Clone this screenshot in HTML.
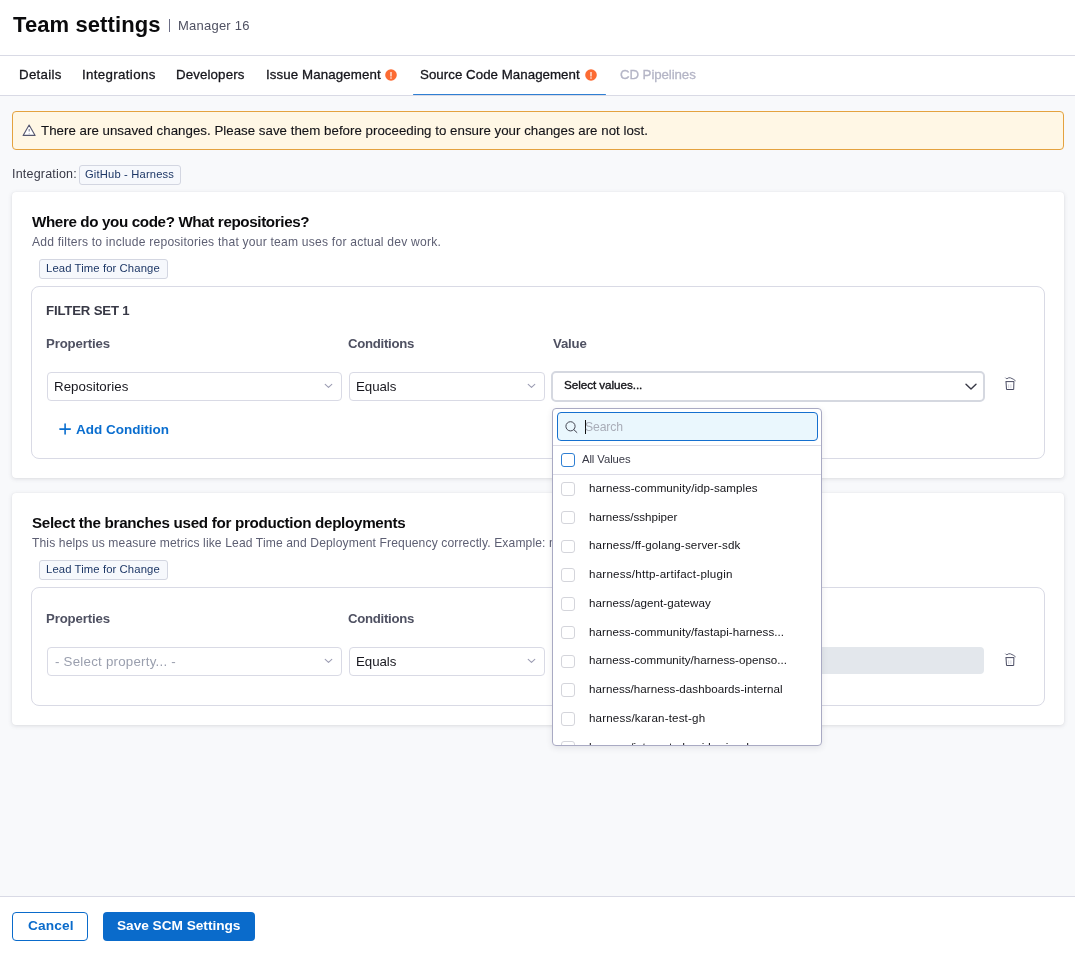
<!DOCTYPE html>
<html><head><meta charset="utf-8"><style>
*{box-sizing:border-box;margin:0;padding:0}
html,body{width:1075px;height:954px;overflow:hidden;background:#f8f9fb;font-family:"Liberation Sans",sans-serif;color:#22222a;position:relative}
.t{position:absolute;white-space:nowrap;will-change:transform}
.r{position:absolute}
svg{position:absolute;overflow:visible}
</style></head><body>
<div class="r" style="left:0px;top:0px;width:1075px;height:95px;background:#fff"></div>
<div class="r" style="left:0px;top:55px;width:1075px;height:1px;background:#d9dae5"></div>
<div class="r" style="left:0px;top:95px;width:1075px;height:1px;background:#d9dae5"></div>
<div class="t" style="left:12.88px;top:12.38px;font-size:22px;line-height:26.4px;font-weight:bold;color:#0b0b0d;letter-spacing:0.100px;">Team settings</div>
<div class="r" style="left:169px;top:18.5px;width:1.3px;height:13.5px;background:#6b6d85"></div>
<div class="t" style="left:177.83px;top:17.90px;font-size:13px;line-height:15.6px;font-weight:normal;color:#4f5162;letter-spacing:0.230px;">Manager 16</div>
<div class="t" style="left:18.90px;top:66.81px;font-size:13.3px;line-height:15.96px;font-weight:normal;color:#16161c;letter-spacing:0.283px;-webkit-text-stroke:0.3px #16161c;">Details</div>
<div class="t" style="left:81.67px;top:66.81px;font-size:13.3px;line-height:15.96px;font-weight:normal;color:#16161c;letter-spacing:0.346px;-webkit-text-stroke:0.3px #16161c;">Integrations</div>
<div class="t" style="left:175.80px;top:66.81px;font-size:13.3px;line-height:15.96px;font-weight:normal;color:#16161c;letter-spacing:0.122px;-webkit-text-stroke:0.3px #16161c;">Developers</div>
<div class="t" style="left:265.57px;top:66.81px;font-size:13.3px;line-height:15.96px;font-weight:normal;color:#16161c;letter-spacing:0.101px;-webkit-text-stroke:0.3px #16161c;">Issue Management</div>
<div class="t" style="left:420.20px;top:66.81px;font-size:13.3px;line-height:15.96px;font-weight:normal;color:#16161c;letter-spacing:0.035px;-webkit-text-stroke:0.3px #16161c;">Source Code Management</div>
<div class="t" style="left:619.63px;top:66.81px;font-size:13.3px;line-height:15.96px;font-weight:normal;color:#b4b5c6;letter-spacing:-0.095px;-webkit-text-stroke:0.3px #b4b5c6;">CD Pipelines</div>
<svg style="left:385.3px;top:69.1px" width="12" height="12" viewBox="0 0 12 12"><circle cx="6" cy="6" r="5.8" fill="#fc6b33"/><rect x="5.4" y="2.9" width="1.2" height="4.5" rx="0.5" fill="#fff"/><rect x="5.4" y="8.2" width="1.2" height="1.6" rx="0.4" fill="#fff"/></svg>
<svg style="left:585.1px;top:69.1px" width="12" height="12" viewBox="0 0 12 12"><circle cx="6" cy="6" r="5.8" fill="#fc6b33"/><rect x="5.4" y="2.9" width="1.2" height="4.5" rx="0.5" fill="#fff"/><rect x="5.4" y="8.2" width="1.2" height="1.6" rx="0.4" fill="#fff"/></svg>
<div class="r" style="left:413px;top:93.5px;width:193px;height:1.8px;background:#2f7fd3;border-radius:1px"></div>
<div class="r" style="left:12px;top:111px;width:1052px;height:39px;background:#fff7e5;border:1px solid #e4a23f;border-radius:4px"></div>
<svg style="left:22px;top:123.5px" width="15" height="13" viewBox="0 0 15 13"><path d="M7.1 1.0 L13.1 11.4 H1.1 Z" fill="#fff" stroke="#55576f" stroke-width="1.1" stroke-linejoin="round"/><path d="M7.2 4.9 V7.6" stroke="#7d7f95" stroke-width="1.1"/><circle cx="7.2" cy="9.7" r="0.55" fill="#9a9cb0"/></svg>
<div class="t" style="left:40.60px;top:122.61px;font-size:13.3px;line-height:15.96px;font-weight:normal;color:#131318;letter-spacing:0.016px;-webkit-text-stroke:0.12px #131318;">There are unsaved changes. Please save them before proceeding to ensure your changes are not lost.</div>
<div class="t" style="left:11.54px;top:166.57px;font-size:12.5px;line-height:15.0px;font-weight:normal;color:#383946;letter-spacing:0.195px;">Integration:</div>
<div class="r" style="left:79px;top:165px;width:102px;height:20px;background:#f6f8fc;border:1px solid #d3d6e1;border-radius:3px"></div>
<div class="t" style="left:84.94px;top:167.60px;font-size:11.2px;line-height:13.44px;font-weight:normal;color:#1d3766;letter-spacing:0.169px;">GitHub - Harness</div>
<div class="r" style="left:12px;top:192px;width:1052px;height:286px;background:#fff;border-radius:4px;box-shadow:0 0 1px rgba(40,41,61,0.08),0 1px 4px rgba(96,97,112,0.18)"></div>
<div class="t" style="left:32.00px;top:213.41px;font-size:15.2px;line-height:18.24px;font-weight:bold;color:#0b0b0d;letter-spacing:-0.377px;">Where do you code? What repositories?</div>
<div class="t" style="left:31.97px;top:235.45px;font-size:12.1px;line-height:14.52px;font-weight:normal;color:#5d5f73;letter-spacing:0.217px;">Add filters to include repositories that your team uses for actual dev work.</div>
<div class="r" style="left:39px;top:259px;width:129px;height:20px;background:#f6f8fc;border:1px solid #d3d6e1;border-radius:3px"></div>
<div class="t" style="left:46.07px;top:261.80px;font-size:11.3px;line-height:13.56px;font-weight:normal;color:#1d3766;letter-spacing:0.100px;">Lead Time for Change</div>
<div class="r" style="left:31px;top:286px;width:1014px;height:173px;background:#fff;border:1px solid #d9dae5;border-radius:8px"></div>
<div class="t" style="left:46.31px;top:302.91px;font-size:13.2px;line-height:15.84px;font-weight:bold;color:#383946;letter-spacing:-0.162px;">FILTER SET 1</div>
<div class="t" style="left:46.31px;top:335.81px;font-size:13.2px;line-height:15.84px;font-weight:bold;color:#4f5162;letter-spacing:-0.139px;">Properties</div>
<div class="t" style="left:348.47px;top:335.81px;font-size:13.2px;line-height:15.84px;font-weight:bold;color:#4f5162;letter-spacing:-0.283px;">Conditions</div>
<div class="t" style="left:552.60px;top:335.81px;font-size:13.2px;line-height:15.84px;font-weight:bold;color:#4f5162;letter-spacing:-0.164px;">Value</div>
<div class="r" style="left:47px;top:372px;width:295px;height:29px;background:#fff;border:1px solid #d9dae5;border-radius:4px"></div>
<div class="t" style="left:54.30px;top:378.71px;font-size:13.3px;line-height:15.96px;font-weight:normal;color:#18181f;letter-spacing:0.041px;">Repositories</div>
<svg style="left:324.0px;top:383px" width="9" height="6" viewBox="0 0 9 6"><path d="M1.2 1.3 L4.5 4.4 L7.8 1.3" fill="none" stroke="#9c9db3" stroke-width="1.1" stroke-linecap="round" stroke-linejoin="round"/></svg>
<div class="r" style="left:349px;top:372px;width:196px;height:29px;background:#fff;border:1px solid #d9dae5;border-radius:4px"></div>
<div class="t" style="left:356.00px;top:378.71px;font-size:13.3px;line-height:15.96px;font-weight:normal;color:#18181f;letter-spacing:-0.060px;">Equals</div>
<svg style="left:527.0px;top:383px" width="9" height="6" viewBox="0 0 9 6"><path d="M1.2 1.3 L4.5 4.4 L7.8 1.3" fill="none" stroke="#9c9db3" stroke-width="1.1" stroke-linecap="round" stroke-linejoin="round"/></svg>
<div class="r" style="left:551px;top:371px;width:434px;height:30.5px;background:#fff;border:2px solid #d5d8e0;border-radius:5px"></div>
<div class="t" style="left:563.97px;top:377.93px;font-size:11.7px;line-height:14.04px;font-weight:normal;color:#141419;letter-spacing:-0.063px;-webkit-text-stroke:0.35px #141419;">Select values...</div>
<svg style="left:964.5px;top:382.5px" width="12" height="8" viewBox="0 0 12 8"><path d="M1 1.2 L6 6.0 L11 1.2" fill="none" stroke="#383946" stroke-width="1.4" stroke-linecap="round" stroke-linejoin="round"/></svg>
<svg style="left:1004px;top:376px" width="14" height="16" viewBox="0 0 14 16"><path d="M1.6 2.0 Q2.2 2.9 3.0 2.7 Q4.8 1.3 6.3 1.8 Q9.6 3.0 11.3 4.6" fill="none" stroke="#4a4c63" stroke-width="0.9" stroke-linecap="round"/><path d="M1.6 5.6 H10.2" stroke="#4a4c63" stroke-width="1"/><path d="M2.0 5.6 L2.5 13.5 H9.7 L9.9 5.6" fill="none" stroke="#4a4c63" stroke-width="1" stroke-linejoin="round"/><path d="M4.7 8.3 V12.2 M6.9 8.3 V12.2" stroke="#c9cad6" stroke-width="0.8"/></svg>
<svg style="left:59px;top:422px" width="12" height="13" viewBox="0 0 12 13"><path d="M6.1 2.1 V12 M0.9 7.1 H11.3" stroke="#0a6ecf" stroke-width="1.6" stroke-linecap="round"/></svg>
<div class="t" style="left:75.66px;top:421.52px;font-size:13.5px;line-height:16.2px;font-weight:bold;color:#0a6ecf;letter-spacing:-0.008px;">Add Condition</div>
<div class="r" style="left:12px;top:493px;width:1052px;height:232px;background:#fff;border-radius:4px;box-shadow:0 0 1px rgba(40,41,61,0.08),0 1px 4px rgba(96,97,112,0.18)"></div>
<div class="t" style="left:31.54px;top:514.41px;font-size:15.2px;line-height:18.24px;font-weight:bold;color:#0b0b0d;letter-spacing:-0.308px;">Select the branches used for production deployments</div>
<div class="t" style="left:31.73px;top:535.75px;font-size:12.1px;line-height:14.52px;color:#5d5f73;letter-spacing:0.124px">This helps us measure metrics like Lead Time and Deployment Frequency correctly. Example: main, master, release/*</div>
<div class="r" style="left:39px;top:560px;width:129px;height:20px;background:#f6f8fc;border:1px solid #d3d6e1;border-radius:3px"></div>
<div class="t" style="left:46.07px;top:562.80px;font-size:11.3px;line-height:13.56px;font-weight:normal;color:#1d3766;letter-spacing:0.100px;">Lead Time for Change</div>
<div class="r" style="left:31px;top:587px;width:1014px;height:119px;background:#fff;border:1px solid #d9dae5;border-radius:8px"></div>
<div class="t" style="left:46.31px;top:611.11px;font-size:13.2px;line-height:15.84px;font-weight:bold;color:#4f5162;letter-spacing:-0.139px;">Properties</div>
<div class="t" style="left:348.47px;top:611.11px;font-size:13.2px;line-height:15.84px;font-weight:bold;color:#4f5162;letter-spacing:-0.283px;">Conditions</div>
<div class="r" style="left:47px;top:647px;width:295px;height:29px;background:#fff;border:1px solid #d9dae5;border-radius:4px"></div>
<div class="t" style="left:54.80px;top:653.71px;font-size:13.3px;line-height:15.96px;font-weight:normal;color:#9a9fae;letter-spacing:0.236px;">- Select property... -</div>
<svg style="left:324.0px;top:658px" width="9" height="6" viewBox="0 0 9 6"><path d="M1.2 1.3 L4.5 4.4 L7.8 1.3" fill="none" stroke="#9c9db3" stroke-width="1.1" stroke-linecap="round" stroke-linejoin="round"/></svg>
<div class="r" style="left:349px;top:647px;width:196px;height:29px;background:#fff;border:1px solid #d9dae5;border-radius:4px"></div>
<div class="t" style="left:356.00px;top:653.71px;font-size:13.3px;line-height:15.96px;font-weight:normal;color:#18181f;letter-spacing:-0.060px;">Equals</div>
<svg style="left:527.0px;top:658px" width="9" height="6" viewBox="0 0 9 6"><path d="M1.2 1.3 L4.5 4.4 L7.8 1.3" fill="none" stroke="#9c9db3" stroke-width="1.1" stroke-linecap="round" stroke-linejoin="round"/></svg>
<div class="r" style="left:552px;top:647px;width:432px;height:27px;background:#e3e7ec;border-radius:4px"></div>
<svg style="left:1004px;top:652px" width="14" height="16" viewBox="0 0 14 16"><path d="M1.6 2.0 Q2.2 2.9 3.0 2.7 Q4.8 1.3 6.3 1.8 Q9.6 3.0 11.3 4.6" fill="none" stroke="#4a4c63" stroke-width="0.9" stroke-linecap="round"/><path d="M1.6 5.6 H10.2" stroke="#4a4c63" stroke-width="1"/><path d="M2.0 5.6 L2.5 13.5 H9.7 L9.9 5.6" fill="none" stroke="#4a4c63" stroke-width="1" stroke-linejoin="round"/><path d="M4.7 8.3 V12.2 M6.9 8.3 V12.2" stroke="#c9cad6" stroke-width="0.8"/></svg>
<div class="r" style="left:0px;top:896px;width:1075px;height:58px;background:#fff;border-top:1px solid #d9dae5"></div>
<div class="r" style="left:12px;top:912px;width:76px;height:29px;background:#fff;border:1px solid #0a6bcb;border-radius:4px"></div>
<div class="t" style="left:27.55px;top:917.73px;font-size:13.7px;line-height:16.44px;font-weight:bold;color:#0a6bcb;letter-spacing:0.154px;">Cancel</div>
<div class="r" style="left:103px;top:912px;width:152px;height:29px;background:#0a6bcb;border-radius:4px"></div>
<div class="t" style="left:116.89px;top:917.73px;font-size:13.7px;line-height:16.44px;font-weight:bold;color:#ffffff;letter-spacing:-0.033px;">Save SCM Settings</div>
<div class="r" style="left:552px;top:408px;width:270px;height:338px;background:#fff;border:1px solid #a9aac3;border-radius:4px;box-shadow:0 2px 6px rgba(40,41,61,0.10)"></div>
<div class="r" style="left:557px;top:412px;width:261px;height:29px;background:#eaf7fd;border:1.2px solid #1570cf;border-radius:4px"></div>
<svg style="left:564.5px;top:421px" width="13" height="12" viewBox="0 0 13 12"><circle cx="5.5" cy="5.3" r="4.6" fill="none" stroke="#3c3d4a" stroke-width="0.95"/><path d="M8.9 8.7 L11.9 11.5" stroke="#3c3d4a" stroke-width="1" stroke-linecap="round"/></svg>
<div class="r" style="left:585px;top:420px;width:1.1px;height:14px;background:#111"></div>
<div class="t" style="left:585.45px;top:419.75px;font-size:12.2px;line-height:14.64px;font-weight:normal;color:#a9adb8;letter-spacing:-0.126px;">Search</div>
<div class="r" style="left:553px;top:445px;width:268px;height:1px;background:#dcdce6"></div>
<div class="r" style="left:561px;top:453px;width:14px;height:14px;background:#fff;border:1.3px solid #2f7fd3;border-radius:3px"></div>
<div class="t" style="left:582.37px;top:453.10px;font-size:11.3px;line-height:13.56px;font-weight:normal;color:#383946;letter-spacing:-0.087px;">All Values</div>
<div class="r" style="left:553px;top:474px;width:268px;height:1px;background:#dcdce6"></div>
<div class="r" style="left:552px;top:475px;width:270px;height:270px;overflow:hidden">
<div class="r" style="left:9.299999999999955px;top:7.199999999999989px;width:13.5px;height:13.5px;background:#fff;border:1px solid #d4d5db;border-radius:3px"></div>
<div class="t" style="left:36.69px;top:6.02px;font-size:11.6px;line-height:13.92px;font-weight:normal;color:#141419;letter-spacing:0.058px;">harness-community/idp-samples</div>
<div class="r" style="left:9.299999999999955px;top:35.93000000000001px;width:13.5px;height:13.5px;background:#fff;border:1px solid #d4d5db;border-radius:3px"></div>
<div class="t" style="left:36.69px;top:34.75px;font-size:11.6px;line-height:13.92px;font-weight:normal;color:#141419;letter-spacing:-0.003px;">harness/sshpiper</div>
<div class="r" style="left:9.299999999999955px;top:64.65999999999997px;width:13.5px;height:13.5px;background:#fff;border:1px solid #d4d5db;border-radius:3px"></div>
<div class="t" style="left:36.69px;top:63.48px;font-size:11.6px;line-height:13.92px;font-weight:normal;color:#141419;letter-spacing:0.147px;">harness/ff-golang-server-sdk</div>
<div class="r" style="left:9.299999999999955px;top:93.38999999999999px;width:13.5px;height:13.5px;background:#fff;border:1px solid #d4d5db;border-radius:3px"></div>
<div class="t" style="left:36.69px;top:92.21px;font-size:11.6px;line-height:13.92px;font-weight:normal;color:#141419;letter-spacing:0.230px;">harness/http-artifact-plugin</div>
<div class="r" style="left:9.299999999999955px;top:122.12px;width:13.5px;height:13.5px;background:#fff;border:1px solid #d4d5db;border-radius:3px"></div>
<div class="t" style="left:36.69px;top:120.94px;font-size:11.6px;line-height:13.92px;font-weight:normal;color:#141419;letter-spacing:0.063px;">harness/agent-gateway</div>
<div class="r" style="left:9.299999999999955px;top:150.85000000000002px;width:13.5px;height:13.5px;background:#fff;border:1px solid #d4d5db;border-radius:3px"></div>
<div class="t" style="left:36.69px;top:149.67px;font-size:11.6px;line-height:13.92px;font-weight:normal;color:#141419;letter-spacing:0.050px;">harness-community/fastapi-harness...</div>
<div class="r" style="left:9.299999999999955px;top:179.57999999999993px;width:13.5px;height:13.5px;background:#fff;border:1px solid #d4d5db;border-radius:3px"></div>
<div class="t" style="left:36.69px;top:178.40px;font-size:11.6px;line-height:13.92px;font-weight:normal;color:#141419;letter-spacing:0.020px;">harness-community/harness-openso...</div>
<div class="r" style="left:9.299999999999955px;top:208.30999999999995px;width:13.5px;height:13.5px;background:#fff;border:1px solid #d4d5db;border-radius:3px"></div>
<div class="t" style="left:36.69px;top:207.13px;font-size:11.6px;line-height:13.92px;font-weight:normal;color:#141419;letter-spacing:0.048px;">harness/harness-dashboards-internal</div>
<div class="r" style="left:9.299999999999955px;top:237.03999999999996px;width:13.5px;height:13.5px;background:#fff;border:1px solid #d4d5db;border-radius:3px"></div>
<div class="t" style="left:36.69px;top:235.86px;font-size:11.6px;line-height:13.92px;font-weight:normal;color:#141419;letter-spacing:0.166px;">harness/karan-test-gh</div>
<div class="r" style="left:9.299999999999955px;top:265.77px;width:13.5px;height:13.5px;background:#fff;border:1px solid #d4d5db;border-radius:3px"></div>
<div class="t" style="left:36.69px;top:264.59px;font-size:11.6px;line-height:13.92px;font-weight:normal;color:#141419;letter-spacing:0.000px;">harness/integrated-guidewire-demo</div>
</div>
</body></html>
